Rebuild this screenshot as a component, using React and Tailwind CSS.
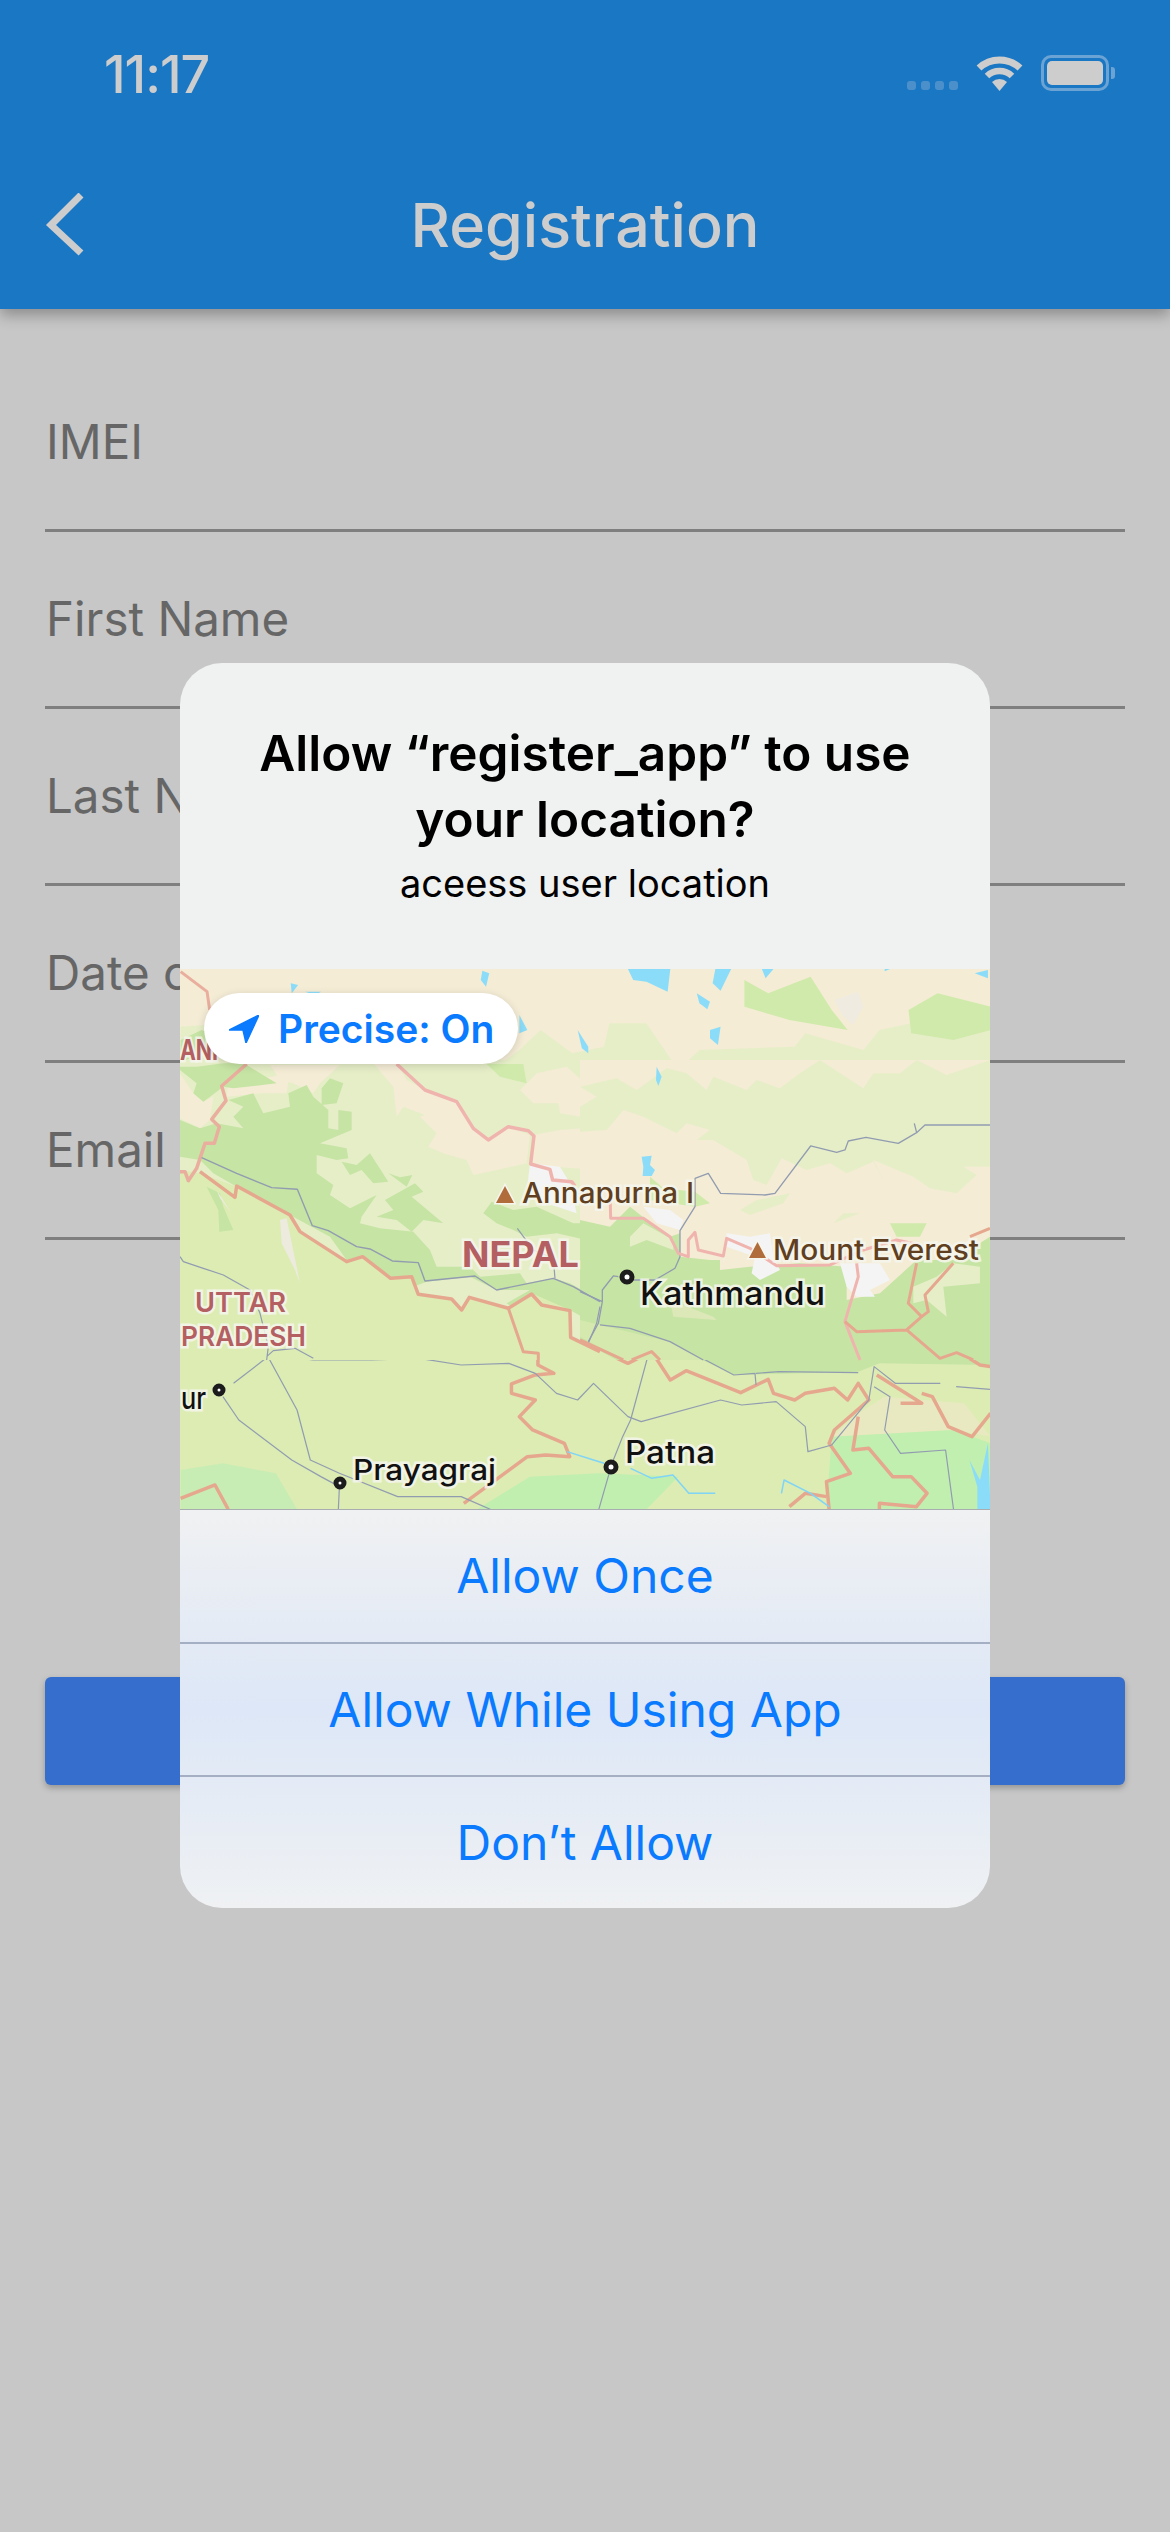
import React from 'react';

const FIELDS = ['IMEI', 'First Name', 'Last Name', 'Date of Birth', 'Email'];
const BUTTONS = ['Allow Once', 'Allow While Using App', "Don\u2019t Allow"];

// map geometry was traced from crops, so each group keeps its crop's scale
const TOP = 'translate(-10,-19) scale(0.5294,0.3333)';
const BOTTOM = 'translate(-10,261) scale(0.5294,0.3333)';
const MID_LEFT = 'translate(0,91) scale(0.3333)';
const MID_RIGHT = 'translate(400,91) scale(0.3333)';

const CREAM = '#f4ecd5';
const LIGHT = '#e6eec8';
const DEEP = '#c6e4a4';
const PLAIN = '#dcecb3';
const SNOW = '#f4f4f5';
const LAKE = '#8bdcf9';
const BORDER = '#e9ae9e';
const PINK = '#f0b4ae';
const ROAD = '#929cb0';

const topLakes = [
  'M865 57 L945 57 L940 125 L900 95 L875 90Z', 'M1030 57 L1060 57 L1040 122 L1025 100Z', 'M1118 57 L1140 57 L1125 85Z',
  'M590 62 L603 70 L597 110 L587 90Z', 'M228 100 L242 105 L230 130Z', 'M255 125 L285 125 L275 135Z',
  'M995 130 L1020 155 L1015 178 L1000 160Z', 'M1020 240 L1040 230 L1035 285 L1020 265Z', 'M770 240 L790 290 L790 310 L778 295Z',
  'M660 195 L675 240 L660 250Z', 'M1350 57 L1360 57 L1350 64Z', 'M1520 70 L1545 60 L1545 85Z',
];

const topBorders = ['M20 65 L70 125 L75 180'];

const bottomBorders = [
  'M240 0 L335 95 L365 80 L420 145 L460 140 L470 190 L545 205 L550 240 L565 200 L640 235 L665 350 L695 370 L695 405 L725 430 L690 435 L645 462 L645 490 L690 510 L660 560 L685 600 L745 640 L755 680 L710 675 L675 680 L555 820',
  'M635 210 L685 190 L705 225 L755 240 L755 320 L865 400 L910 365 L945 450 L975 422 L1078 488 L1130 448 L1140 490 L1180 510 L1200 490 L1255 475 L1280 510 L1300 460 L1320 510 L1255 600 L1245 640 L1285 730 L1240 755 L1245 838',
  'M1300 100 L1300 200 L1275 270 L1290 300 L1395 300 L1450 385 L1490 365 L1530 405 L1550 410',
  'M1395 300 L1430 240 L1400 140',
  'M1335 435 L1420 520 L1380 520 M1420 490 L1440 500 L1470 590 L1515 620 L1550 550',
  'M1300 560 L1290 660 L1320 655 L1365 740 L1400 740 L1430 790 L1410 830 L1340 820 L1340 838',
  'M20 805 L85 765 L110 838',
  'M1170 830 L1200 790 L1240 800',
];

const bottomRoads = [
  'M815 280 L940 330 L1065 435 L1105 430 L1107 465 M1107 430 L1150 425 L1300 428',
  'M20 90 L120 155 L165 230 L185 370 L270 390 L380 390 L470 385 L550 405 L640 400 L690 430 L730 490 L770 510 L800 460 L865 560 L890 575 L1040 510 L1080 525 L1145 515 L1200 590 L1205 665 L1250 645 L1320 510 L1330 410 L1370 460 L1455 460',
  'M1485 470 L1550 478',
  'M185 380 L240 540 L265 690 L320 730 L430 800 L550 800 L605 838',
  'M185 380 L120 460',
  'M100 500 L130 570 L230 690 L285 740 L320 770 L318 838',
  'M905 365 L870 570 L855 620 L835 700 L810 838',
  'M1330 470 L1360 500 L1350 600 L1380 670 L1465 660 L1480 838',
];

function Line({ d, color, width }) {
  return <path d={d} fill="none" stroke={color} strokeWidth={width} strokeLinejoin="round" vectorEffect="non-scaling-stroke" />;
}

function MapLabel({ x, y, size, width, fill, weight = 500, children }) {
  return (
    <text
      x={x}
      y={y}
      fontSize={size}
      fontWeight={weight}
      fill={fill}
      textLength={width}
      lengthAdjust="spacingAndGlyphs"
      stroke="#f6f6ee"
      strokeOpacity="0.85"
      strokeWidth="5"
      className="[paint-order:stroke]"
    >
      {children}
    </text>
  );
}

function CityDot({ x, y, r = 5 }) {
  return <circle cx={x} cy={y} r={r} fill="#ffffff" stroke="#1c1c1c" strokeWidth="5" />;
}

function MapFills() {
  return (
    <>
      <g transform={TOP}>
        <path fill={LIGHT} d="M20 230 L110 220 L240 300 L330 300 L430 345 L560 350 L590 380 L660 300 L700 240 L760 310 L820 290 L830 220 L900 220 L960 360 L1000 300 L1180 290 L1200 250 L1310 300 L1340 240 L1550 170 L1550 340 L20 340 Z" />
        <path fill={DEEP} d="M20 270 L60 240 L100 270 L20 340Z" />
        <path fill="#d0eaab" d="M1085 90 L1130 130 L1210 80 L1250 180 L1280 240 L1170 210 L1085 170 Z" />
        <path fill="#d0eaab" d="M1395 180 L1450 130 L1550 170 L1550 240 L1480 270 L1400 250Z" />
        <path fill="#d0eaab" d="M610 360 L670 340 L670 400 L620 390Z" />
        <path fill="#efebe0" d="M1255 150 L1300 125 L1310 170 L1290 225 L1270 195Z" />
        {topLakes.map((d) => <path key={d} d={d} fill={LAKE} />)}
      </g>

      <g transform={BOTTOM}>
        <rect x="0" y="0" width="1570" height="840" fill={PLAIN} />
        <path fill={DEEP} d="M940 340 L1065 435 L1300 425 L1340 400 L1550 405 L1550 300 L940 300 Z" />
        <path fill="#e8e9c0" d="M1300 550 L1350 500 L1500 520 L1550 620 L1480 600 L1250 620Z" />
        <path fill="#c0efb0" d="M1250 620 L1480 600 L1550 640 L1550 838 L1240 838Z" />
        <path fill="#c0efb0" d="M580 838 L680 740 L810 730 L960 740 L900 838Z" />
        <path fill="#c8edb4" d="M20 720 L100 700 L200 730 L240 838 L20 838Z" />
        <path fill={LAKE} d="M1510 690 L1530 750 L1545 640 L1550 838 L1525 838 L1525 770 Z" />
      </g>

      <g transform={MID_LEFT}>
        <rect width="1260" height="900" fill={LIGHT} />
        <path fill={CREAM} d="M650 170 L670 140 L735 165 L720 170 L770 220 L745 260 L790 280 L860 300 L880 345 L950 330 L1040 310 L1050 225 L985 200 L925 240 L880 205 L830 125 L735 90 L680 60 L650 10 L580 10 L640 80Z" />
        <path fill={CREAM} d="M1020 90 L1070 40 L1160 20 L1240 90 L1260 180 L1140 160 L1135 130 L1060 130 Z" />
        <path fill={CREAM} d="M1060 225 L1140 210 L1260 200 L1260 330 L1120 320 L1055 310Z" />
        <path fill={CREAM} d="M0 40 L40 100 L70 125 L100 110 L90 180 L60 205 L0 175Z" />
        <path fill={CREAM} d="M145 60 L280 50 L330 30 L320 100 L240 100 L140 110 Z" />
        <path fill={CREAM} d="M270 15 L480 15 L420 70 L400 100 L340 70 L300 60Z" />
        <path fill={DEEP} d="M0 20 L50 20 L130 10 L200 10 L130 80 L70 125 L40 100 L50 70 L0 30Z" />
        <path fill={DEEP} d="M200 15 L290 70 L160 85 L130 80Z" />
        <path fill={DEEP} d="M0 180 L60 205 L110 190 L190 205 L160 170 L190 140 L145 120 L220 100 L250 160 L330 140 L325 100 L380 75 L400 110 L445 150 L445 205 L475 210 L475 150 L515 155 L515 210 L420 250 L500 265 L505 295 L470 300 L410 285 L410 340 L460 375 L450 405 L510 445 L590 405 L545 470 L540 490 L600 505 L650 510 L700 515 L750 570 L770 620 L870 620 L900 650 L1020 640 L1040 670 L1120 655 L1170 670 L1260 720 L1260 800 L1170 750 L1080 740 L1030 765 L980 730 L1050 690 L950 690 L870 650 L740 665 L700 680 L630 660 L560 620 L500 600 L450 530 L330 465 L170 380 L100 340 L60 300 L0 290Z" />
        <path fill={DEEP} d="M910 460 L935 425 L1000 450 L1070 440 L1180 490 L1260 490 L1260 640 L1220 620 L1220 540 L1130 520 L1040 530 L1000 510 L950 490Z" />
        <path fill={DEEP} d="M485 305 L530 315 L570 280 L625 365 L580 370 L545 330 L510 345Z" />
        <path fill={DEEP} d="M625 340 L660 352 L697 345 L680 380Z" />
        <path fill={DEEP} d="M615 420 L705 370 L730 395 L695 410 L790 490 L730 480 L695 515 L650 480 L590 470 L640 450Z" />
        <path fill={DEEP} d="M425 85 L450 55 L490 70 L470 130 L425 135Z" />
        <path fill="#d0eaab" d="M920 12 L1030 12 L1040 70 L960 50Z" />
        <path fill={PLAIN} d="M0 330 L60 340 L170 380 L330 465 L360 515 L500 605 L545 590 L630 655 L695 650 L715 705 L810 715 L845 750 L870 712 L980 745 L1055 700 L1170 750 L1170 830 L1260 880 L1260 900 L0 900Z" />
        <path fill={DEEP} d="M80 380 L120 400 L130 440 L160 510 L118 515 L115 450Z" />
        <path fill={SNOW} d="M1050 310 L1140 320 L1170 370 L1190 460 L1100 430 L1040 400Z" />
        <path fill="#ecebdd" d="M110 390 L155 460 L120 415Z M300 480 L320 475 L350 620 L360 670 L345 630 L305 550Z" />
      </g>

      <g transform={MID_RIGHT}>
        <rect width="1230" height="900" fill={CREAM} />
        <path fill={LIGHT} d="M110 55 L170 90 L260 25 L320 40 L380 90 L400 50 L500 90 L530 60 L600 85 L660 40 L720 0 L850 85 L880 40 L960 40 L1010 0 L1100 45 L1230 0 L1230 320 L1150 320 L1190 345 L1130 400 L1050 385 L1000 350 L880 300 L910 360 L880 305 L800 340 L750 310 L680 330 L605 295 L560 375 L520 360 L500 300 L400 240 L350 240 L390 210 L320 190 L290 220 L190 170 L130 150 L80 210 L0 215 L0 140 L50 110 L0 80Z" />
        <path fill={LIGHT} d="M480 450 L530 420 L630 400 L610 430 L510 465Z" />
        <path fill={LIGHT} d="M760 490 L790 460 L840 460Z" />
        <path fill="#d0eaab" d="M930 490 L1040 490 L1020 530 L950 530Z" />
        <path fill="#d0eaab" d="M210 350 L250 385 L345 395 L390 430 L345 440 L210 420Z" />
        <path fill={DEEP} d="M0 480 L90 500 L150 440 L200 480 L270 530 L300 520 L300 590 L390 600 L420 600 L420 630 L510 620 L660 610 L800 620 L800 720 L900 700 L1010 600 L1120 600 L1230 530 L1230 900 L0 900Z" />
        <path fill={LIGHT} d="M1000 680 L1070 650 L1120 610 L1200 620 L1200 670 L1090 680 L1100 770 L1040 720 L1000 730Z" />
        <path fill="#dde8b8" d="M270 720 L400 770 L410 780 L280 770Z" />
        <path fill={LIGHT} d="M150 530 L190 490 L280 540 L280 570 L200 540 L150 560Z" />
        <path fill="#d5e8ae" d="M0 780 L60 795 L270 845 L370 900 L130 900 L0 830Z" />
        <path fill={PLAIN} d="M0 840 L110 900 L0 900Z" />
        <path fill={SNOW} d="M190 440 L270 450 L310 480 L300 510 L230 490Z" />
        <path fill={SNOW} d="M440 520 L510 530 L570 520 L580 590 L600 630 L540 660 L515 640 L525 590 L440 560 L430 610Z" />
        <path fill={SNOW} d="M780 610 L900 610 L930 660 L870 690 L885 710 L830 710 L800 680Z" />
        <path fill={LAKE} d="M230 20 L245 50 L235 78 L228 60Z" />
        <path fill={LAKE} d="M185 290 L215 287 L210 315 L225 330 L215 348 L188 348 L190 320Z" />
      </g>
    </>
  );
}

function MapLines() {
  return (
    <>
      <g clipPath="url(#map-top)">
        <g transform={TOP}>
          {topBorders.map((d) => <Line key={d} d={d} color={BORDER} width={3} />)}
        </g>
      </g>
      <g clipPath="url(#map-bottom)">
        <g transform={BOTTOM}>
          {bottomBorders.map((d) => <Line key={d} d={d} color="#e6a78f" width={3.5} />)}
          {bottomRoads.map((d) => <Line key={d} d={d} color={ROAD} width={1.2} />)}
          <Line d="M750 665 L800 690 L820 700 M870 715 L910 745 L950 735 L980 790 L1030 790 M1155 790 L1160 750 L1210 790 L1245 830" color="#7fd4f7" width={1.5} />
        </g>
      </g>
      <g transform={MID_LEFT}>
        <Line d="M200 12 L125 78 L138 122 L95 178 L118 200 L103 250 L75 250 L50 325 L25 362 L15 335 L0 335" color={BORDER} width={3.5} />
        <Line d="M60 335 L165 412 L170 378 L330 465 L360 515 L500 605 L548 590 L632 655 L695 650 L715 703 L815 717 L845 750 L868 712 L985 745 L1055 702 L1085 735 L1170 752 L1172 832 L1260 875" color="#e6a78f" width={3.5} />
        <Line d="M985 745 L1030 875 L1075 880 L1075 900" color="#e6a78f" width={3} />
        <Line d="M650 12 L735 90 L830 125 L880 205 L925 240 L985 200 L1045 212 L1062 228 L1052 312 L1110 328 L1118 360 L1175 365 L1185 378" color={PINK} width={3.5} />
        <Line d="M65 293 L170 340 L275 383 L352 388 L397 497 L445 512 L530 560 L570 567 L637 603 L715 608 L735 663 L885 648 L950 690 L1120 655 L1180 680 L1260 725" color={ROAD} width={1.4} />
        <Line d="M1012 505 L1060 570 L1120 595 L1125 655" color={ROAD} width={1.2} />
        <Line d="M0 590 L10 605 L70 625 L130 645 L210 690 L240 760 L265 860 L260 900 M260 890 L280 872 L345 865 L400 895" color={ROAD} width={1.2} />
        <Line d="M1260 740 L1250 790 L1225 850" color={ROAD} width={1.2} />
      </g>
      <g transform={MID_RIGHT}>
        <Line d="M345 355 L385 340 L422 400 L555 405 L585 400 L692 258 L770 277 L795 270 L805 243 L858 232 L955 250 L1010 218 L1035 195 L1230 195 M1003 190 L1010 218" color={ROAD} width={1.3} />
        <Line d="M345 355 L345 440 L300 512 L300 590 L285 625 L225 660 L160 660 M115 650 L100 648 L67 690 L67 725 L55 790 L25 845 M0 695 L67 725 M60 795 L150 805 L270 845 L370 900" color={ROAD} width={1.3} />
        <Line d="M90 390 L92 475 L190 475 L270 530 L295 580 L325 590 L325 540 L345 517 L355 570 L430 588 L440 535 L510 565 L590 617 L750 615 L850 570 L950 540 L1020 555" color={PINK} width={3} />
        <Line d="M830 610 L835 650 L795 785 L840 900" color={PINK} width={3} />
        <Line d="M795 785 L830 815 L980 810 L1080 895 L1130 878 L1180 900 M980 810 L1025 770 L985 730 L1010 610 M1025 770 L1045 755 L1035 705 L1120 610 M1170 530 L1230 505" color="#e6a78f" width={3} />
        <Line d="M0 840 L130 900 M155 900 L215 875 L240 900" color="#e6a78f" width={3} />
      </g>
    </>
  );
}

function NepalMap() {
  return (
    <svg width="810" height="540" viewBox="0 0 810 540" className="block [font-family:Inter,sans-serif]">
      <defs>
        <clipPath id="map-top"><rect x="0" y="0" width="810" height="91" /></clipPath>
        <clipPath id="map-bottom"><rect x="0" y="391" width="810" height="149" /></clipPath>
      </defs>
      <rect width="810" height="540" fill={CREAM} />
      <MapFills />
      <MapLines />

      <MapLabel x={0} y={91} size={28} width={38} fill="#b45f62" weight={700}>ANI</MapLabel>
      <polygon points="316,234 334,234 325,217" fill="#b06c3b" stroke="#f6f6ee" strokeWidth="3" className="[paint-order:stroke]" />
      <MapLabel x={342} y={234} size={28} width={172} fill="#5f3f20">Annapurna I</MapLabel>
      <polygon points="569,289 586,289 577.5,273" fill="#b06c3b" stroke="#f6f6ee" strokeWidth="3" className="[paint-order:stroke]" />
      <MapLabel x={593} y={291} size={28} width={206} fill="#5f3f20">Mount Everest</MapLabel>
      <MapLabel x={282} y={298} size={35} width={117} fill="#b45f62" weight={700}>NEPAL</MapLabel>
      <MapLabel x={15} y={343} size={27} width={91} fill="#b45f62" weight={600}>UTTAR</MapLabel>
      <MapLabel x={1} y={377} size={27} width={125} fill="#b45f62" weight={600}>PRADESH</MapLabel>
      <CityDot x={447} y={308} />
      <MapLabel x={460} y={336} size={33} width={185} fill="#111111">Kathmandu</MapLabel>
      <CityDot x={39} y={421} r={4} />
      <MapLabel x={1} y={440} size={30} width={25} fill="#111111">ur</MapLabel>
      <CityDot x={160} y={514} r={4} />
      <MapLabel x={173} y={511} size={29} width={143} fill="#111111">Prayagraj</MapLabel>
      <CityDot x={431} y={498} />
      <MapLabel x={445} y={494} size={31} width={90} fill="#111111">Patna</MapLabel>
    </svg>
  );
}

function StatusIcons() {
  return (
    <div className="flex items-end">
      <div className="flex gap-[5px] mb-[1px]">
        <span className="w-[9px] h-[9px] rounded-[3px] bg-[#4c90cb]" />
        <span className="w-[9px] h-[9px] rounded-[3px] bg-[#4c90cb]" />
        <span className="w-[9px] h-[9px] rounded-[3px] bg-[#4c90cb]" />
        <span className="w-[9px] h-[9px] rounded-[3px] bg-[#4c90cb]" />
      </div>
      <svg width="49" height="36" viewBox="0 0 49 36" className="ml-[17px]">
        <path d="M4 13 A 30 30 0 0 1 45 13" fill="none" stroke="#cdcdcd" strokeWidth="7" />
        <path d="M12 21 A 18 18 0 0 1 37 21" fill="none" stroke="#cdcdcd" strokeWidth="6.5" />
        <path d="M24.5 36 L17 27 A 11 11 0 0 1 32 27Z" fill="#cdcdcd" />
      </svg>
      <div className="ml-[17px] flex items-center">
        <div className="w-[68px] h-[36px] rounded-[10px] border-[3px] border-[#6aa3d4] p-[3px]">
          <div className="w-full h-full rounded-[5px] bg-[#cdcdcd]" />
        </div>
        <div className="ml-[2px] w-[4px] h-[12px] rounded-r-[3px] bg-[#6aa3d4]" />
      </div>
    </div>
  );
}

function Header() {
  return (
    <header className="h-[309px] bg-[#1a77c3] shadow-[0_6px_14px_rgba(0,0,0,0.3)] relative">
      <div className="flex items-start justify-between pl-[104px] pr-[55px] pt-[55px] h-[175px]">
        <span className="text-[52px] leading-[40px] font-medium text-[#cdcdcd] tracking-[-1px]">11:17</span>
        <StatusIcons />
      </div>
      <div className="flex items-center h-[100px]">
        <svg width="40" height="64" viewBox="0 0 40 64" className="ml-[45px]">
          <polyline points="36,4 6,34 36,62" fill="none" stroke="#cdcdcd" strokeWidth="7" transform="translate(0,-2)" />
        </svg>
        <h1 className="flex-1 text-center pr-[85px] text-[61px] leading-[70px] font-medium text-[#cdcdcd]">Registration</h1>
      </div>
    </header>
  );
}

function Form() {
  return (
    <div className="px-[45px] pt-[46px]">
      {FIELDS.map((label) => (
        <div key={label} className="h-[177px] flex items-end pb-[63px] border-b-[3px] border-[#7f7f7f]">
          <span className="pl-[1px] text-[47.5px] leading-[48px] text-[#666666]">{label}</span>
        </div>
      ))}
      <button className="block w-full mt-[437px] h-[108px] rounded-[6px] bg-[#366ecd] shadow-[0_3px_6px_rgba(0,0,0,0.25)]" />
    </div>
  );
}

function LocationDialog() {
  return (
    <div className="absolute left-[180px] top-[663px] w-[810px] rounded-[42px] overflow-hidden">
      <div className="h-[306px] bg-[#f0f1f1] pt-[57px] text-center text-black">
        <h2 className="text-[49.5px] leading-[66px] font-semibold">
          Allow “register_app” to use
          <br />
          your location?
        </h2>
        <p className="mt-[7px] text-[38px] leading-[48px]">aceess user location</p>
      </div>
      <div className="relative">
        <NepalMap />
        <div className="absolute left-[24px] top-[24px] w-[314px] h-[71px] rounded-full bg-white shadow-[0_2px_8px_rgba(0,0,0,0.15)] flex items-center pl-[25px]">
          <svg width="30" height="28" viewBox="0 0 30 28">
            <path d="M30 0 L0 15 L14 15 L17 28 Z" fill="#0a7aff" stroke="#0a7aff" strokeWidth="1.5" strokeLinejoin="round" />
          </svg>
          <span className="ml-[19px] text-[39px] leading-[44px] font-semibold text-[#0a7aff]">Precise: On</span>
        </div>
      </div>
      <div className="bg-linear-to-b from-[#f0f1f2] via-[#dde7f7] to-[#eff1f3] border-t border-[#a9adaf]">
        {BUTTONS.map((label, i) => (
          <div
            key={label}
            className={
              i === 0
                ? 'h-[132px] flex items-center justify-center text-[48px] text-[#0a7aff]'
                : 'h-[133px] flex items-center justify-center text-[48px] text-[#0a7aff] border-t-2 border-[#a5afc4]'
            }
          >
            {label}
          </div>
        ))}
      </div>
    </div>
  );
}

export default function App() {
  return (
    <div className="relative w-[1170px] h-[2532px] overflow-hidden bg-[#c7c7c7] [font-family:Inter,sans-serif]">
      <Header />
      <Form />
      <LocationDialog />
    </div>
  );
}
